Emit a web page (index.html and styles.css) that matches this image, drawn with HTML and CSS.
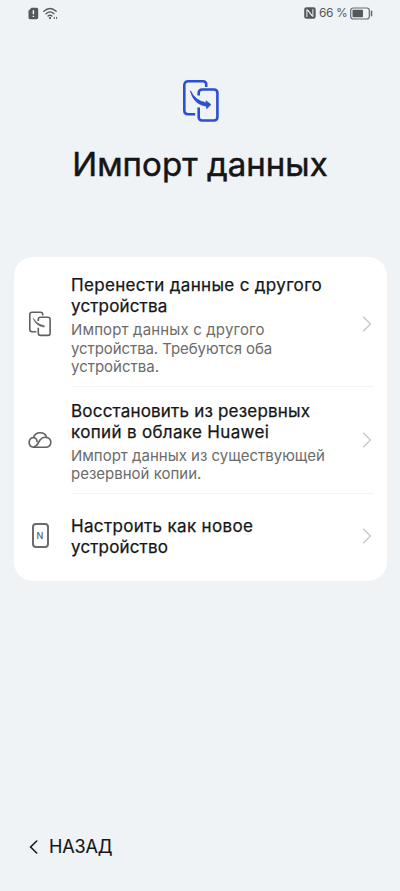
FILE: index.html
```html
<!DOCTYPE html>
<html lang="ru">
<head>
<meta charset="utf-8">
<meta name="viewport" content="width=device-width, initial-scale=1">
<title>Импорт данных</title>
<link rel="stylesheet" href="styles.css">
</head>
<body>
<div class="screen">
  <header class="status">
    <div class="status-left">
      <svg width="11" height="13" viewBox="0 0 11 13"><path d="M3.400.8h5.200Q10.200.8 10.200 2.400v8.200q0 1.600-1.600 1.600H2.100Q.5 12.200.5 10.600V3.700z" fill="#55585a"/><path d="M5.400 3.300v3.900M5.400 8.700v1.400" stroke="#fff" stroke-width="1.400"/></svg>
      <svg width="16" height="13" viewBox="0 0 16 13" fill="none" stroke="#55585a" stroke-width="1.300" stroke-linecap="round"><path d="M.8 4.200q6.200-5.400 12.400 0M3 6.700q4-3.600 8 0M5 9.100q2-1.800 4 0"/><circle cx="7" cy="11.100" r=".5" fill="#55585a"/><path d="M11.300 10.300v1.300M13.600 10.300v1.300" stroke-width="1"/></svg>
    </div>
    <div class="status-right">
      <svg width="12" height="12" viewBox="0 0 12 12"><rect x=".2" y=".3" width="11.500" height="11.400" rx="2.300" fill="#55585a"/><path d="M2.900 10V2.500l5.400 6.800M8.900 2v7.500L3.700 2.700" fill="none" stroke="#eef1f3" stroke-width="1"/></svg>
      <span class="percent">66 %</span>
      <svg width="23" height="13" viewBox="0 0 23 13"><rect x=".7" y="1" width="18.600" height="11" rx="2.500" fill="none" stroke="#66696b" stroke-width="1.200"/><rect x="2.500" y="2.800" width="10.500" height="7.400" rx=".7" fill="#55585a"/><path d="M21.500 4.300v4.400" stroke="#66696b" stroke-width="1.500" stroke-linecap="round"/></svg>
    </div>
  </header>

  <section class="hero">
    <svg class="hero-icon" width="38" height="44" viewBox="0 0 38 44" fill="none" stroke="#2a50d0" stroke-width="2.600"><path d="M24.200 8V5.300Q24.200 2.300 21.200 2.300H6.300Q2.300 2.300 2.300 6.300v25Q2.300 35.300 6.300 35.300h6.900"/><path d="M16.700 16.600V14q0-3.500 3.500-3.500h11.700q3.500 0 3.500 3.500v24q0 3.500-3.500 3.500H20.200q-3.500 0-3.500-3.500v-9.500"/><path d="M8.400 11.800Q13.500 22.300 24.500 23.900L24 21.800 28.900 25.600 24.600 29.700 24.500 27.300Q11.500 25.500 8.400 11.800z" fill="#2a50d0" stroke-width=".8" stroke-linejoin="round"/></svg>
    <h1>Импорт данных</h1>
  </section>

  <main class="card">
    <a class="row row-transfer">
      <svg class="icon" width="24" height="26" viewBox="0 0 24 26" fill="none" stroke="#606060" stroke-width="1.600"><path d="M14.700 4.600V3.500Q14.700 1.300 12.500 1.300H4Q1.800 1.300 1.800 3.500v15Q1.800 20.700 4 20.700h4.300"/><path d="M10.300 10V8.500q0-2.200 2.200-2.200h7.400q2.200 0 2.200 2.200v13.700q0 2.200-2.200 2.200h-7.400q-2.200 0-2.200-2.200v-5.500"/><path d="M5.300 7.200Q8.500 13.300 16.500 14.800l-.5 1.300Q7.500 14.800 5.300 7.200z" fill="#606060" stroke-width=".6"/></svg>
      <div class="body">
        <h2><span>Перенести данные с другого</span><span class="t6">устройства</span></h2>
        <p><span class="d1">Импорт данных с другого</span><span class="d2">устройства. Требуются оба</span><span>устройства.</span></p>
      </div>
      <svg class="chevron" width="10" height="18" viewBox="0 0 10 18"><path d="M1.200 1.800 8.400 9l-7.200 7.200"/></svg>
    </a>
    <a class="row row-restore">
      <svg class="icon" width="26" height="20" viewBox="0 0 26 20" fill="none" stroke="#606060" stroke-width="1.600"><path d="M6.200 17.200h13.100a4.900 4.900 0 0 0 .5-9.700A7 7 0 0 0 6.500 7.500a4.900 4.900 0 0 0-.3 9.700z"/><path d="M6.500 7.500Q10.500 8.500 10 12.200M6.500 17.100Q9.500 16.500 11.500 12.600L13 10Q15.500 6.600 19.800 7.500"/></svg>
      <div class="body">
        <h2><span class="t3">Восстановить из резервных</span><span>копий в облаке Huawei</span></h2>
        <p><span>Импорт данных из существующей</span><span>резервной копии.</span></p>
      </div>
      <svg class="chevron" width="10" height="18" viewBox="0 0 10 18"><path d="M1.200 1.800 8.400 9l-7.200 7.200"/></svg>
    </a>
    <a class="row row-new">
      <span class="icon phone">N</span>
      <div class="body">
        <h2><span>Настроить как новое</span><span class="t6">устройство</span></h2>
      </div>
      <svg class="chevron" width="10" height="18" viewBox="0 0 10 18"><path d="M1.200 1.800 8.400 9l-7.200 7.200"/></svg>
    </a>
  </main>

  <footer class="footer">
    <svg width="9" height="14" viewBox="0 0 9 14"><path d="M7.700 1 1.600 7l6.100 6" fill="none" stroke="#181a1b" stroke-width="1.600" stroke-linecap="round"/></svg>
    <span class="back">НАЗАД</span>
  </footer>
</div>
</body>
</html>
```
FILE: styles.css
```css
* { box-sizing: border-box; }
body { margin: 0; background: #f0f3f5; font-family: Inter, "Noto Sans", sans-serif; color: #151617; }
svg { display: block; flex: none; }
.screen { height: 891px; display: flex; flex-direction: column; }
.status { height: 26px; padding: 0 27px 0 28px; display: flex; justify-content: space-between; align-items: center; }
.status-left, .status-right { display: flex; align-items: center; }
.status-left { gap: 4px; }
.status-right { gap: 3px; }
.percent { width: 28px; font: 12px/14px Inter, sans-serif; letter-spacing: -0.4px; color: #55585a; white-space: nowrap; }
.hero { height: 231px; padding-top: 53px; display: flex; flex-direction: column; align-items: center; }
.hero-icon { margin-left: 1px; }
h1 { margin: 20px 0 0; font: 400 33px/42px Inter, sans-serif; letter-spacing: 0.05px; -webkit-text-stroke: 0.5px; white-space: nowrap; }
.card { margin: 0 13px 0 14px; height: 324px; background: #fff; border-radius: 19px; }
.row { display: grid; grid-template-columns: 24px 1fr 10px; column-gap: 19px; padding: 0 15px 0 14px; align-items: center; }
.row-transfer { height: 130px; }
.row-transfer .icon, .row-transfer .chevron { margin-top: 3px; }
.row-transfer .body { padding-top: 9px; }
.row-restore { height: 107px; }
.row-restore .icon, .row-restore .chevron { margin-bottom: 1px; }
.row-restore .body { padding-top: 4px; }
.row-new { height: 87px; padding-bottom: 4px; }
.row-new .body { margin-top: 2px; }
.icon { justify-self: center; }
.body { align-self: stretch; display: flex; flex-direction: column; justify-content: center; margin-right: -31px; }
.row-transfer .body, .row-restore .body { border-bottom: 1px solid #f3f3f3; }
h2, p { margin: 0; white-space: nowrap; }
h2 { font: 400 17px/21px Inter, sans-serif; letter-spacing: 0.33px; -webkit-text-stroke: 0.25px; }
p { margin-top: 4px; font: 400 15px/18.5px Inter, sans-serif; color: #6b6b6b; }
h2 span, p span { display: block; width: max-content; }
.t3 { letter-spacing: 0.2px; }
.t6 { letter-spacing: 0.16px; }
.d1 { letter-spacing: 0.15px; }
.d2 { letter-spacing: -0.08px; }
.chevron path { fill: none; stroke: #cacaca; stroke-width: 1.500; }
.phone { width: 17px; height: 25px; border: 2px solid #6c6c6c; border-radius: 4px; font: 500 9px/21px Inter, sans-serif; text-align: center; color: #606060; }
.footer { margin-top: auto; height: 88px; padding-left: 29px; display: flex; align-items: center; gap: 11px; }
.back { font: 400 18px/24px Inter, sans-serif; letter-spacing: -0.15px; -webkit-text-stroke: 0.15px; }
```
